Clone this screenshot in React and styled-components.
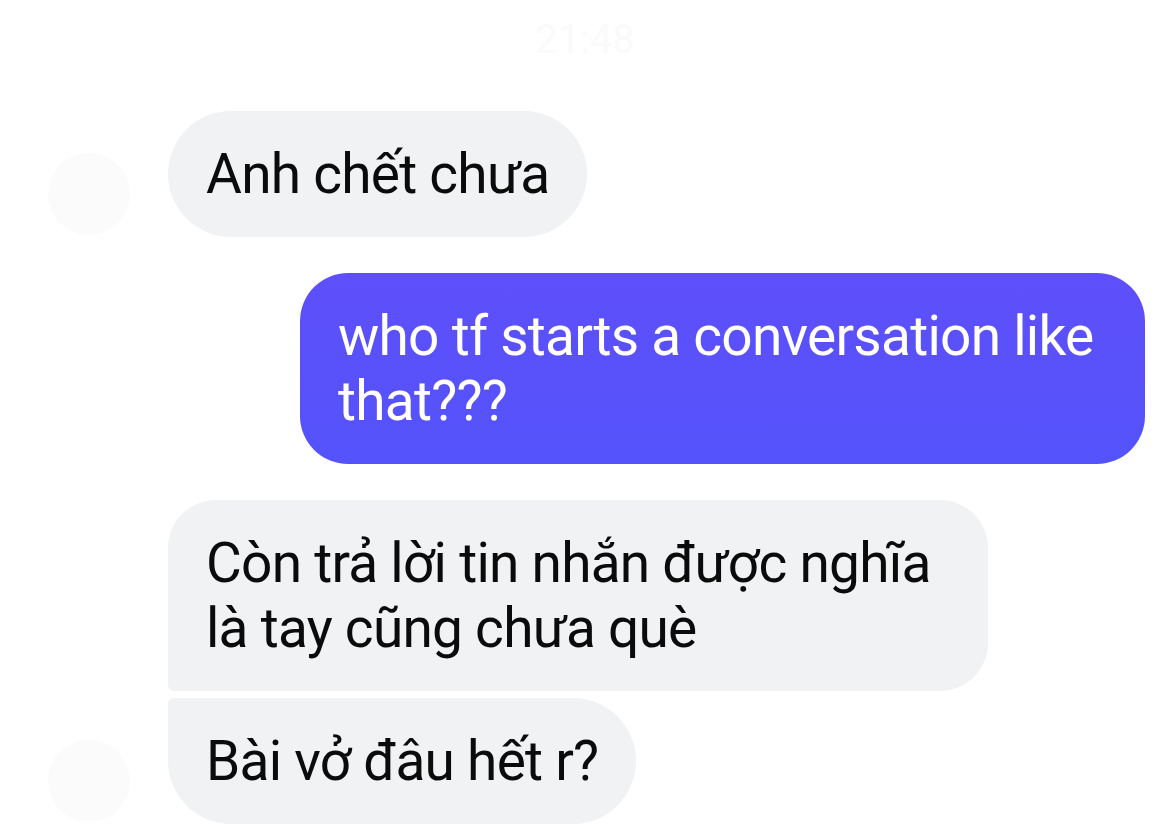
import React from "react";
import styled, { createGlobalStyle } from "styled-components";

const GlobalStyle = createGlobalStyle`
  html, body {
    margin: 0;
    padding: 0;
    background: #ffffff;
  }
  body {
    font-family: Roboto, "Noto Sans", "Liberation Sans", sans-serif;
  }
`;

const Screen = styled.div`
  width: 1170px;
  height: 838px;
  overflow: hidden;
  background: #ffffff;
  display: flex;
  flex-direction: column;
`;

const Time = styled.div`
  text-align: center;
  font-size: 40px;
  color: #fafafa;
  height: 111px;
  padding-top: 20px;
  box-sizing: border-box;
  line-height: 40px;
`;

const Thread = styled.div`
  display: flex;
  flex-direction: column;
  gap: 36px;
  padding: 0 25px 0 48px;
`;

const Group = styled.div`
  display: flex;
  align-items: flex-end;
  justify-content: ${(p) => (p.$mine ? "flex-end" : "flex-start")};
  gap: 38px;
`;

const Avatar = styled.div`
  width: 82px;
  height: 82px;
  flex: none;
  border-radius: 50%;
  background: #fbfbfb;
  margin-bottom: 2px;
`;

const Stack = styled.div`
  display: flex;
  flex-direction: column;
  align-items: flex-start;
  gap: 7px;
`;

const Bubble = styled.div`
  box-sizing: border-box;
  font-size: 55px;
  line-height: 65px;
  padding: 31px 38px 30px;
  border-radius: ${(p) => p.$radius};
  background: ${(p) =>
    p.$mine ? "linear-gradient(180deg, #5e4ffa 0%, #5453fb 100%)" : "#f0f2f4"};
  color: ${(p) => (p.$mine ? "#ffffff" : "#0b0b0b")};
  max-width: ${(p) => (p.$mine ? "845px" : "820px")};
  letter-spacing: -0.75px;
`;

export default function App() {
  return (
    <Screen>
      <GlobalStyle />
      <Time>21:48</Time>
      <Thread>
        <Group>
          <Avatar />
          <Stack>
            <Bubble $radius="63px">Anh chết chưa</Bubble>
          </Stack>
        </Group>
        <Group $mine>
          <Stack>
            <Bubble $mine $radius="48px">
              who tf starts a conversation like that???
            </Bubble>
          </Stack>
        </Group>
        <Group>
          <Avatar />
          <Stack>
            <Bubble $radius="48px 48px 48px 6px">
              Còn trả lời tin nhắn được nghĩa là tay cũng chưa què
            </Bubble>
            <Bubble $radius="6px 63px 63px 63px">Bài vở đâu hết r?</Bubble>
          </Stack>
        </Group>
      </Thread>
    </Screen>
  );
}
